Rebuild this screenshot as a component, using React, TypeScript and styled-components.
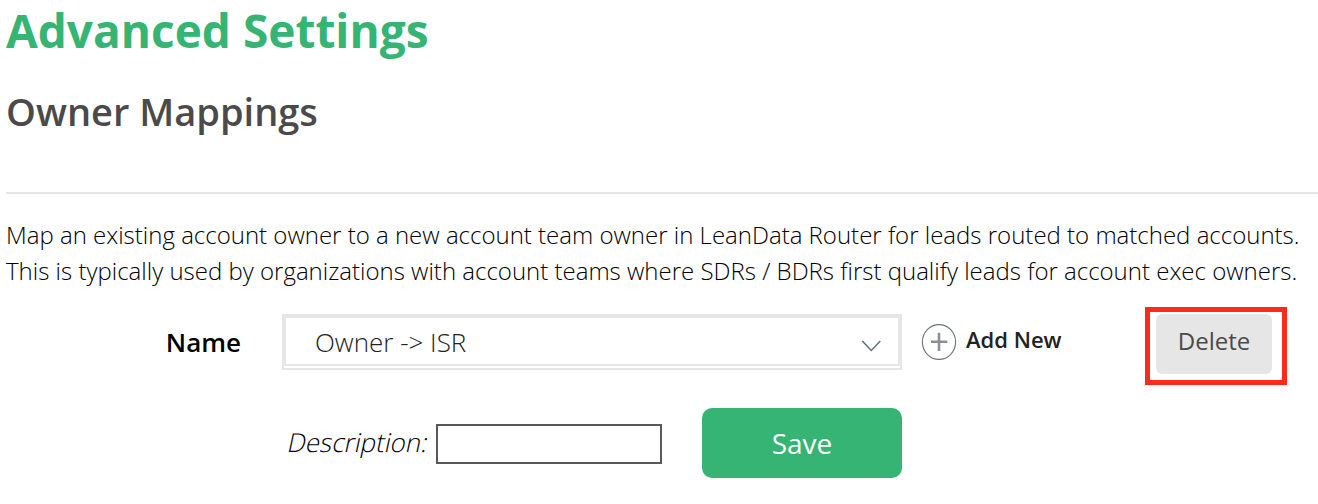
import React from "react";
import styled, { createGlobalStyle } from "styled-components";

const Global = createGlobalStyle`
  * { box-sizing: border-box; }
  body { margin: 0; background: #fff; font-family: "Open Sans", sans-serif; color: #000; }
`;
const Page = styled.main`width: 1318px; height: 504px; padding-left: 6px; overflow: hidden;`;
const Title = styled.h1`margin: 0; height: 60px; font-size: 46px; line-height: 60px; font-weight: 700; color: #36b473; white-space: nowrap;`;
const Subtitle = styled.h2`margin: 19px 0 0; height: 64px; font-size: 38px; line-height: 64px; font-weight: 600; color: #4a4a4a; white-space: nowrap;`;
const Rule = styled.hr`margin: 49px 0 0; border: 0; height: 2px; background: #e6e6e6;`;
const Intro = styled.div`margin-top: 23px; font-size: 24px; line-height: 36px; font-weight: 300;`;
const Line = styled.div`white-space: nowrap;`;
const MappingRow = styled.div`display: flex; align-items: flex-start; height: 80px; margin-top: 18px;`;
const Label = styled.label`width: 276px; padding: 18px 41px 0 0; text-align: right; font-size: 26px; line-height: 34px; font-weight: 600;`;
const SelectFrame = styled.div`width: 620px; height: 56px; margin-top: 7px; padding-bottom: 2px; border: 2px solid #e6e6e6;`;
const Select = styled.div`display: flex; justify-content: space-between; align-items: center; height: 50px; padding: 2px 17px 0 29px; border: 2px solid #e6e6e6; color: #222; font-size: 26px; font-weight: 300;`;
const Chevron = styled.svg`margin-top: 7px;`;
const AddNew = styled.button`display: flex; align-items: center; gap: 9px; height: 36px; margin: 17px 0 0 19px; padding: 0; border: 0; background: none; color: #222; font: 600 22px "Open Sans", sans-serif; width: 224px;`;
const AddText = styled.span`padding-bottom: 6px;`;
const Highlight = styled.div`width: 142px; height: 78px; border: 5px solid #ff2a1c; padding: 2px 0 0 6px;`;
const Delete = styled.button`width: 116px; height: 60px; padding: 0 0 8px; border: 0; border-radius: 6px; background: #e6e6e6; color: #4a4a4a; font: 400 24px "Open Sans", sans-serif;`;
const DetailRow = styled.div`display: flex; height: 70px; margin-top: 21px; padding-left: 282px; align-items: center;`;
const Description = styled.label`width: 148px; padding-bottom: 3px; font-size: 26px; font-weight: 300; transform: skewX(-12deg);`;
const Input = styled.input`width: 226px; height: 40px; margin-top: 2px; border: 2px solid #58585a; border-radius: 0; background: #fff;`;
const Save = styled.button`width: 200px; height: 70px; margin-left: 40px; border: 0; border-radius: 10px; background: #36b473; color: #fff; font: 400 28px "Open Sans", sans-serif;`;

export default function App() {
  return (
    <Page>
      <Global />
      <Title>Advanced Settings</Title>
      <Subtitle>Owner Mappings</Subtitle>
      <Rule />
      <Intro>
        <Line>Map an existing account owner to a new account team owner in LeanData Router for leads routed to matched accounts.</Line>
        <Line>This is typically used by organizations with account teams where SDRs / BDRs first qualify leads for account exec owners.</Line>
      </Intro>
      <MappingRow>
        <Label>Name</Label>
        <SelectFrame>
          <Select>
            <span>Owner -&gt; ISR</span>
            <Chevron width="20" height="12" viewBox="0 0 20 12" fill="none" stroke="#5f727a" strokeWidth="1.5"><path d="M1.3 1l9 9.5 9-9.5" /></Chevron>
          </Select>
        </SelectFrame>
        <AddNew>
          <svg width="36" height="36" viewBox="0 0 36 36" fill="none"><ellipse cx="18" cy="18" rx="16.6" ry="17.4" stroke="#6d7475" strokeWidth="1.1" /><path d="M18 8.7v18.3M10 17.8h16.3" stroke="#8b9096" strokeWidth="2.6" /></svg>
          <AddText>Add New</AddText>
        </AddNew>
        <Highlight><Delete>Delete</Delete></Highlight>
      </MappingRow>
      <DetailRow>
        <Description htmlFor="description">Description:</Description>
        <Input id="description" />
        <Save>Save</Save>
      </DetailRow>
    </Page>
  );
}
